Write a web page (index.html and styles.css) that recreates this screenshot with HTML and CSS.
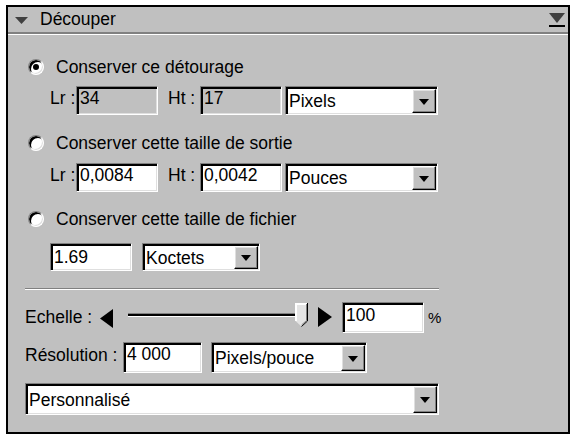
FILE: index.html
```html
<!doctype html>
<html lang="fr">
    <head>
        <meta charset="UTF-8">
        <meta name="viewport" content="width=device-width, initial-scale=1.0">
        <title>Découper</title>

        <link rel="stylesheet" href="styles.css">
    </head>
    <body>
        <div class="panel">
            <div class="panel__title">
                <svg class="panel__toggle" width="13" height="8" viewBox="0 0 13 8">
                    <polygon points="0,0 13,0 6.5,7" fill="#404040" />
                </svg>
                <span class="panel__name">Découper</span>
                <svg class="panel__menu" width="18" height="16" viewBox="0 0 18 16">
                    <polygon points="1,1 17,1 9,11" fill="#404040" />
                    <rect x="1" y="13" width="16" height="2" fill="#000" />
                </svg>
            </div>

            <div class="panel__body">
                <div class="option option--1">
                    <span class="radio radio--checked"></span>
                    Conserver ce détourage
                </div>
                <div class="row row--1">
                    <span class="label label--lr">Lr :</span>
                    <span class="field field--off field--size">34</span>
                    <span class="label label--ht">Ht :</span>
                    <span class="field field--off field--size">17</span>
                    <span class="select select--unit">
                        <span class="select__text">Pixels</span>
                        <span class="select__btn"></span>
                    </span>
                </div>

                <div class="option option--2">
                    <span class="radio"></span>
                    Conserver cette taille de sortie
                </div>
                <div class="row row--2">
                    <span class="label label--lr">Lr :</span>
                    <span class="field field--size">0,0084</span>
                    <span class="label label--ht">Ht :</span>
                    <span class="field field--size">0,0042</span>
                    <span class="select select--unit">
                        <span class="select__text">Pouces</span>
                        <span class="select__btn"></span>
                    </span>
                </div>

                <div class="option option--3">
                    <span class="radio"></span>
                    Conserver cette taille de fichier
                </div>
                <div class="row row--3">
                    <span class="field field--file">1.69</span>
                    <span class="select select--file">
                        <span class="select__text">Koctets</span>
                        <span class="select__btn"></span>
                    </span>
                </div>

                <div class="separator"></div>

                <div class="row row--scale">
                    <span class="label label--scale">Echelle :</span>
                    <svg class="arrow" width="13" height="19" viewBox="0 0 13 19">
                        <polygon points="13,0 13,19 0,9.5" fill="#000" />
                    </svg>
                    <span class="track"></span>
                    <svg class="thumb" width="13" height="24" viewBox="0 0 13 24">
                        <polygon points="0.5,0.5 12.5,0.5 12.5,18 6.5,23.5 0.5,18" fill="#e4e4e4" />
                        <polyline points="1,18 1,1 12,1" fill="none" stroke="#fff" stroke-width="2" />
                        <polyline points="11.5,1 11.5,17.5 6.5,22" fill="none" stroke="#808080" stroke-width="1" />
                        <polyline points="12.5,0 12.5,18 6.5,23.5" fill="none" stroke="#000" stroke-width="1" />
                    </svg>
                    <svg class="arrow arrow--right" width="14" height="20" viewBox="0 0 14 20">
                        <polygon points="0,0 14,10 0,20" fill="#000" />
                    </svg>
                    <span class="field field--scale">100</span>
                    <span class="unit">%</span>
                </div>

                <div class="row row--res">
                    <span class="label label--res">Résolution :</span>
                    <span class="field field--res">4 000</span>
                    <span class="select select--res">
                        <span class="select__text">Pixels/pouce</span>
                        <span class="select__btn"></span>
                    </span>
                </div>

                <div class="row row--preset">
                    <span class="select select--preset">
                        <span class="select__text">Personnalisé</span>
                        <span class="select__btn"></span>
                    </span>
                </div>
            </div>
        </div>
    </body>
</html>
```

FILE: styles.css
```css
/* base */
:root {
    --face: #c0c0c0;
    --shadow: #808080;
    --light: #dfdfdf;
}

*,
*::before,
*::after {
    box-sizing: border-box;
    padding: 0;
    margin: 0;
}

body {
    font-family: "Liberation Sans", Arial, sans-serif;
    font-size: 17.5px;
    line-height: 1.2;
    color: #000;
    background-color: #fff;
}

/* panel */
.panel {
    inline-size: 564px;
    block-size: 429px;
    margin-block-start: 5px;
    margin-inline-start: 6px;
    border: 2px solid #000;
    background-color: var(--face);
}

.panel__title {
    display: flex;
    align-items: center;
    block-size: 27px;
    padding-inline: 7px 2px;
    border-block-end: 2px solid var(--shadow);
    box-shadow: 0 1px 0 #fff;
}

.panel__toggle {
    margin-block-start: 3px;
}

.panel__name {
    flex: 1;
    margin-inline-start: 12px;
}

.panel__body {
    padding-inline-start: 17px;
}

/* rows */
.option {
    display: flex;
    align-items: center;
    block-size: 22px;
}

.option--1 {
    margin-block-start: 22px;
}

.option--2 {
    margin-block-start: 17px;
}

.option--3 {
    margin-block-start: 16px;
}

.row {
    display: flex;
    align-items: center;
    block-size: 29px;
}

.row--1 {
    margin-block-start: 8px;
    padding-inline-start: 25px;
}

.row--2 {
    margin-block-start: 9px;
    padding-inline-start: 25px;
}

.row--3 {
    block-size: 28px;
    margin-block-start: 13px;
    padding-inline-start: 25px;
}

.row--scale {
    block-size: 31px;
    margin-block-start: 12px;
}

.row--res {
    block-size: 31px;
    margin-block-start: 9px;
}

.row--preset {
    block-size: 32px;
    margin-block-start: 10px;
}

.separator {
    inline-size: 414px;
    margin-block-start: 17px;
    border-block-start: 1px solid var(--shadow);
    border-block-end: 1px solid #fff;
}

/* radio */
.radio {
    position: relative;
    flex: none;
    inline-size: 16px;
    block-size: 16px;
    margin-inline: 3px 12px;
    border: 1px solid;
    border-color: var(--shadow) #fff #fff var(--shadow);
    border-radius: 50%;
    background-color: #fff;
    box-shadow: inset 2px 2px 0 #000, inset -1px -1px 0 var(--light);
}

.radio--checked::after {
    content: "";
    position: absolute;
    inset-block-start: 4px;
    inset-inline-start: 4px;
    inline-size: 6px;
    block-size: 6px;
    border-radius: 50%;
    background-color: #000;
}

/* labels */
.label {
    flex: none;
    margin-block-end: 4px;
    white-space: nowrap;
}

.label--lr {
    inline-size: 26px;
}

.label--ht {
    inline-size: 32px;
    margin-inline-start: 10px;
}

.label--scale {
    inline-size: 75px;
    margin-block-end: 0;
}

.label--res {
    inline-size: 98px;
}

.unit {
    margin-inline-start: 4px;
    font-size: 15px;
}

/* edit fields */
.field {
    display: block;
    flex: none;
    align-self: stretch;
    padding-block-start: 1px;
    padding-inline-start: 3px;
    border: 1px solid;
    border-color: var(--shadow) #fff #fff var(--shadow);
    background-color: #fff;
    box-shadow: inset 2px 2px 0 #000, inset -1px -1px 0 var(--light);
    line-height: 20px;
}

.field--off {
    background-color: var(--face);
}

.field--size {
    inline-size: 82px;
}

.field--size + .label {
    margin-inline-start: 10px;
}

.field--file {
    inline-size: 82px;
    padding-block-start: 3px;
}

.field--scale {
    inline-size: 82px;
    margin-inline-start: 10px;
    padding-block-start: 2px;
}

.field--res {
    inline-size: 79px;
}

/* select */
.select {
    display: flex;
    flex: none;
    align-self: stretch;
    padding-inline-start: 3px;
    border: 1px solid;
    border-color: var(--shadow) #fff #fff var(--shadow);
    background-color: #fff;
    box-shadow: inset 2px 2px 0 #000, inset -1px -1px 0 var(--light);
}

.select__text {
    flex: 1;
    align-self: center;
    padding-block-start: 2px;
}

.select__btn {
    display: flex;
    align-items: center;
    justify-content: center;
    inline-size: 24px;
    margin: 2px 1px 1px 0;
    border: 1px solid;
    border-color: #fff #000 #000 #fff;
    background-color: var(--face);
    box-shadow: inset -1px -1px 0 var(--shadow), inset 1px 1px 0 var(--light);
}

.select__btn::after {
    content: "";
    border-inline: 5px solid transparent;
    border-block-start: 6px solid #000;
    margin-block-start: 1px;
}

.select--unit {
    inline-size: 153px;
    margin-inline-start: 3px;
}

.select--file {
    inline-size: 118px;
    margin-inline-start: 10px;
}

.select--res {
    inline-size: 156px;
    margin-inline-start: 9px;
}

.select--preset {
    inline-size: 414px;
}

/* slider */
.arrow {
    flex: none;
    margin-block-start: 2px;
}

.arrow--right {
    margin-inline-start: 10px;
    margin-block-start: -1px;
}

.track {
    flex: none;
    align-self: flex-start;
    inline-size: 167px;
    block-size: 4px;
    margin-block-start: 11px;
    margin-inline-start: 15px;
    border-block-start: 1px solid var(--shadow);
    border-block-end: 1px solid #fff;
    background-color: #000;
}

.thumb {
    flex: none;
    align-self: flex-start;
    margin-block-start: 1px;
}
```
